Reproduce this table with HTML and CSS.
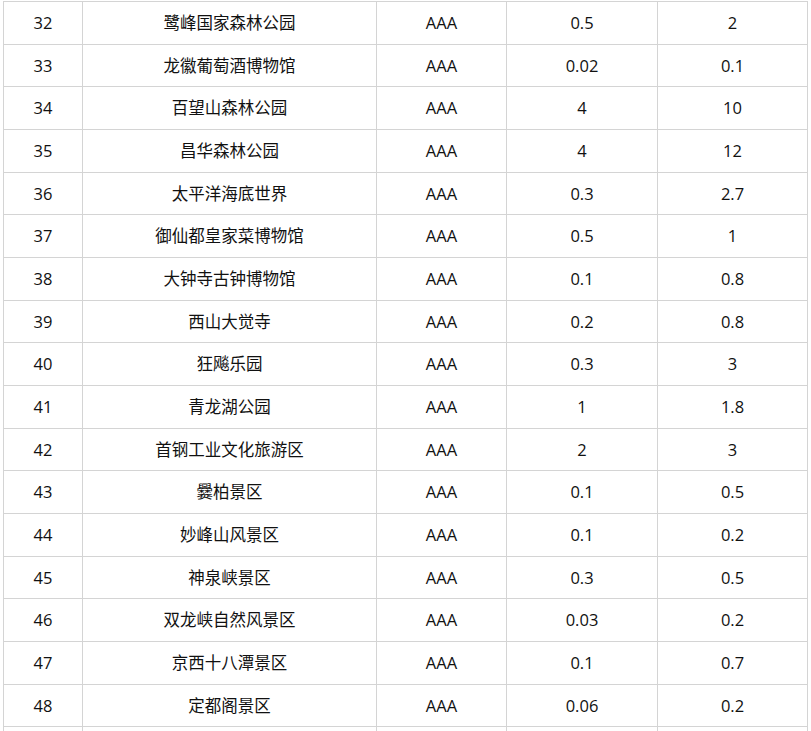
FILE: index.html
```html
<!DOCTYPE html>
<html lang="zh-CN">
<head>
<meta charset="utf-8">
<title>景区列表</title>
<link rel="stylesheet" href="styles.css">
</head>
<body>
<div class="table">
  <div class="cell">32</div><div class="cell">鹭峰国家森林公园</div><div class="cell">AAA</div><div class="cell">0.5</div><div class="cell">2</div>
  <div class="cell">33</div><div class="cell">龙徽葡萄酒博物馆</div><div class="cell">AAA</div><div class="cell">0.02</div><div class="cell">0.1</div>
  <div class="cell">34</div><div class="cell">百望山森林公园</div><div class="cell">AAA</div><div class="cell">4</div><div class="cell">10</div>
  <div class="cell">35</div><div class="cell">昌华森林公园</div><div class="cell">AAA</div><div class="cell">4</div><div class="cell">12</div>
  <div class="cell">36</div><div class="cell">太平洋海底世界</div><div class="cell">AAA</div><div class="cell">0.3</div><div class="cell">2.7</div>
  <div class="cell">37</div><div class="cell">御仙都皇家菜博物馆</div><div class="cell">AAA</div><div class="cell">0.5</div><div class="cell">1</div>
  <div class="cell">38</div><div class="cell">大钟寺古钟博物馆</div><div class="cell">AAA</div><div class="cell">0.1</div><div class="cell">0.8</div>
  <div class="cell">39</div><div class="cell">西山大觉寺</div><div class="cell">AAA</div><div class="cell">0.2</div><div class="cell">0.8</div>
  <div class="cell">40</div><div class="cell">狂飚乐园</div><div class="cell">AAA</div><div class="cell">0.3</div><div class="cell">3</div>
  <div class="cell">41</div><div class="cell">青龙湖公园</div><div class="cell">AAA</div><div class="cell">1</div><div class="cell">1.8</div>
  <div class="cell">42</div><div class="cell">首钢工业文化旅游区</div><div class="cell">AAA</div><div class="cell">2</div><div class="cell">3</div>
  <div class="cell">43</div><div class="cell">爨柏景区</div><div class="cell">AAA</div><div class="cell">0.1</div><div class="cell">0.5</div>
  <div class="cell">44</div><div class="cell">妙峰山风景区</div><div class="cell">AAA</div><div class="cell">0.1</div><div class="cell">0.2</div>
  <div class="cell">45</div><div class="cell">神泉峡景区</div><div class="cell">AAA</div><div class="cell">0.3</div><div class="cell">0.5</div>
  <div class="cell">46</div><div class="cell">双龙峡自然风景区</div><div class="cell">AAA</div><div class="cell">0.03</div><div class="cell">0.2</div>
  <div class="cell">47</div><div class="cell">京西十八潭景区</div><div class="cell">AAA</div><div class="cell">0.1</div><div class="cell">0.7</div>
  <div class="cell">48</div><div class="cell">定都阁景区</div><div class="cell">AAA</div><div class="cell">0.06</div><div class="cell">0.2</div>
  <div class="cell"></div><div class="cell"></div><div class="cell"></div><div class="cell"></div><div class="cell"></div>
</div>
</body>
</html>
```
FILE: styles.css
```css
html, body {
  margin: 0;
  padding: 0;
  background: #ffffff;
  overflow: hidden;
}
body {
  font-family: "Open Sans", "Noto Sans CJK SC", sans-serif;
  font-size: 16.5px;
  color: #111111;
}
.table {
  display: grid;
  grid-template-columns: 78px 293px 129px 150px 149px;
  grid-auto-rows: 41.67px;
  gap: 1px;
  padding: 1px;
  background: #d4d4d4;
  width: max-content;
  margin: 1px 0 0 3px;
}
.cell {
  background: #ffffff;
  display: flex;
  align-items: center;
  justify-content: center;
  padding-top: 1px;
  line-height: 1;
  white-space: nowrap;
}
```
